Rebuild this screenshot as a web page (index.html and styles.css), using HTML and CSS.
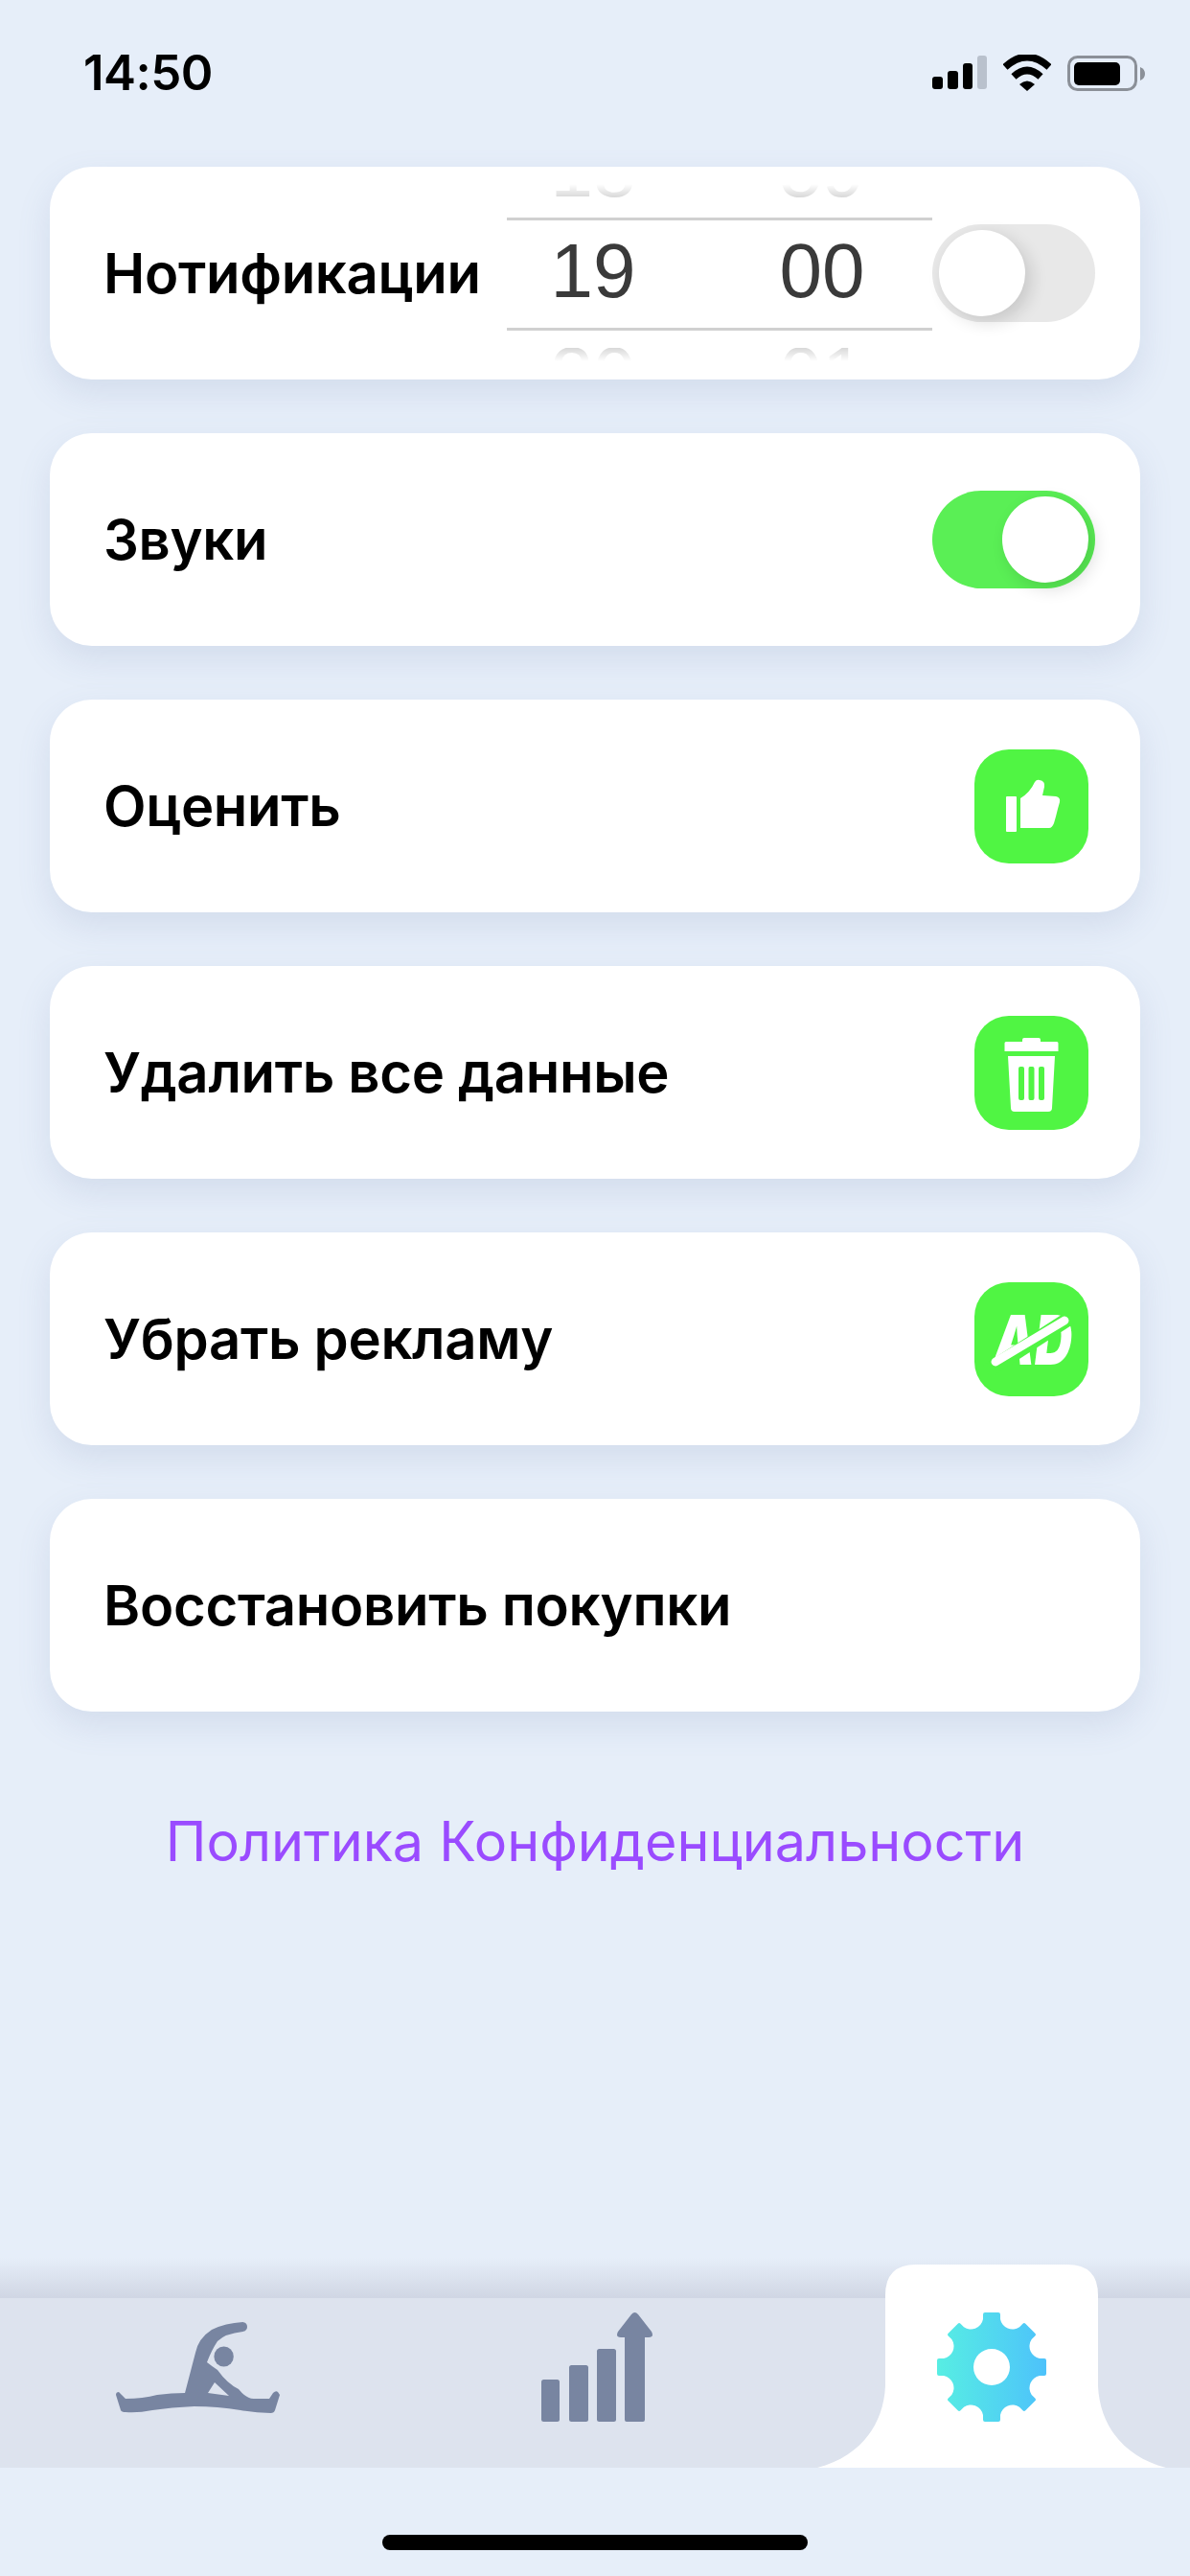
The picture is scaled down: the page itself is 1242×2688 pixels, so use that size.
FILE: index.html
```html
<!DOCTYPE html>
<html lang="ru">
<head>
<meta charset="utf-8">
<title>Настройки</title>
<link rel="stylesheet" href="styles.css">
</head>
<body>
<div class="screen">
  <header class="status">
    <span class="status-time">14:50</span>
    <div class="status-icons">
      <svg class="ic-signal" viewBox="973 58 57 36"><rect x="973" y="80" width="11" height="13" rx="3"/><rect x="989" y="74" width="11" height="19" rx="3"/><rect x="1005" y="66" width="10" height="27" rx="3"/><rect class="dim" x="1020" y="58" width="10" height="35" rx="3"/></svg>
      <svg class="ic-wifi" viewBox="1047 56 50 38"><path class="arc" d="M1049 69 Q1072 48 1095 69"/><path class="arc" d="M1058 79 Q1072 66 1086 79"/><path d="M1064 87 Q1072 80 1080 87 L1072 94 Z"/></svg>
      <svg class="ic-batt" viewBox="1114 56 81 38"><rect class="batt-shell" x="1115.5" y="58.5" width="70" height="34" rx="9"/><rect x="1121" y="64" width="48" height="24" rx="5"/><path class="dim2" d="M1190 69 Q1195 71 1195 76 Q1195 81 1190 83 Z"/></svg>
    </div>
  </header>

  <main class="content">
    <section class="card">
      <span class="label">Нотификации</span>
      <div class="picker">
        <div class="wheel wheel-top"><span>18</span><span>59</span></div>
        <div class="wheel-mid"><span>19</span><span>00</span></div>
        <div class="wheel wheel-bottom"><span>20</span><span>01</span></div>
      </div>
      <div class="toggle"><div class="knob"></div></div>
    </section>

    <section class="card">
      <span class="label">Звуки</span>
      <div class="toggle toggle-on"><div class="knob"></div></div>
    </section>

    <section class="card">
      <span class="label">Оценить</span>
      <svg class="action" viewBox="37 21 119 119">
        <rect class="action-bg" x="37" y="21" width="119" height="119" rx="36"/>
        <rect class="w" x="70" y="70" width="11" height="37" rx="1"/>
        <path class="w" d="M85 72 Q95 66 100 55 Q102 52 105 53 Q111 54 110 60 L108 69 L122 70 Q127 71 126 76 L124 83 L122 91 L120 98 Q118 103 115 103 L85 103 Z"/>
      </svg>
    </section>

    <section class="card">
      <span class="label">Удалить все данные</span>
      <svg class="action" viewBox="37 19 119 119">
        <rect class="action-bg" x="37" y="19" width="119" height="119" rx="36"/>
        <path class="w" d="M87 46 V44 Q87 42 89 42 H104 Q106 42 106 44 V46 H123 Q124.500 46 124.500 47.500 V56 H68.500 V47.500 Q68.500 46 70 46 Z"/>
        <path class="w" fill-rule="evenodd" d="M72 61 H121 L118 115 Q118 119 114 119 H79 Q75 119 75 115 Z M85 72 Q83 72 83 74 V105 Q83 107 85 107 H87 Q89 107 89 105 V74 Q89 72 87 72 Z M95 72 Q93.500 72 93.500 74 V105 Q93.500 107 95 107 H97.500 Q99.500 107 99.500 105 V74 Q99.500 72 97.500 72 Z M106 72 Q104 72 104 74 V105 Q104 107 106 107 H108 Q110 107 110 105 V74 Q110 72 108 72 Z"/>
      </svg>
    </section>

    <section class="card">
      <span class="label">Убрать рекламу</span>
      <svg class="action" viewBox="37 17 119 119">
        <rect class="action-bg" x="37" y="17" width="119" height="119" rx="36"/>
        <text class="ad-text" x="57" y="103" textLength="82" lengthAdjust="spacingAndGlyphs">AD</text>
        <path class="ad-gap" d="M50 110 L140 52"/>
        <path class="ad-line" d="M59 100 L131 57"/>
      </svg>
    </section>

    <section class="card">
      <span class="label">Восстановить покупки</span>
    </section>

    <a class="policy">Политика Конфиденциальности</a>
  </main>

  <nav class="tabs">
    <div class="tab">
      <svg class="ic-stretch" viewBox="120 2420 176 100">
        <ellipse cx="234.600" cy="2459" rx="10.200" ry="10.500"/>
        <path fill-rule="evenodd" d="M254.500 2423 Q259 2424 259 2428 Q259 2432 254.500 2433 Q236 2435 228 2443 Q222 2452 217 2465 Q222 2469 228 2473 Q238 2487 250 2493 Q258 2503 265.600 2503 L282 2503 L286 2497 Q289 2494 291 2496 L293 2499 L288 2515 Q287 2518 283.600 2518 Q268 2518 252 2515 Q228 2511 203.600 2511 Q180 2512 160 2515 Q145 2518 132 2517 Q128 2517 127 2515 L122 2499 Q122 2496 125 2496 L132 2503 Q150 2503 165 2499 Q180 2497 194 2497 L205 2455 Q208 2440 222 2431 Q236 2424 254.500 2423 Z M225 2486 L218 2497 L240 2500 Z"/>
      </svg>
    </div>
    <div class="tab">
      <svg class="ic-chart" viewBox="565 2413 116 114">
        <rect x="565" y="2483" width="19" height="44" rx="2.500"/>
        <rect x="594" y="2468" width="20" height="59" rx="2.500"/>
        <rect x="623" y="2451" width="20" height="76" rx="2.500"/>
        <path d="M652 2525 V2439 H648 Q642 2439 645 2433 L659 2415 Q662.500 2411 666 2415 L680 2433 Q683 2439 677 2439 H673 V2525 Q673 2527 671 2527 H654 Q652 2527 652 2525 Z"/>
      </svg>
    </div>
    <div class="tab tab-active">
      <svg class="tab-shape" viewBox="853 2363 364 212"><path d="M853 2575 C896 2564 922 2532 924 2490 L924 2395 Q924 2363 956 2363 L1114 2363 Q1146 2363 1146 2395 L1146 2490 C1148 2532 1174 2564 1217 2575 Z"/></svg>
      <svg class="ic-gear" viewBox="-58 -58 116 116">
        <defs><linearGradient id="gearFill" x1="0" x2="1" y1="0.500" y2="0.500"><stop offset="0" stop-color="#57eee3"/><stop offset="1" stop-color="#4dc2fb"/></linearGradient></defs>
        <path fill="url(#gearFill)" fill-rule="evenodd" d="M-9 -50 L-9 -55 Q-9 -57 -7 -57 L7 -57 Q9 -57 9 -55 L9 -50 A13 13 0 0 0 29 -41.700 L32.500 -45.300 Q33.900 -46.700 35.300 -45.300 L45.300 -35.300 Q46.700 -33.900 45.300 -32.500 L41.700 -29 A13 13 0 0 0 50 -9 L55 -9 Q57 -9 57 -7 L57 7 Q57 9 55 9 L50 9 A13 13 0 0 0 41.700 29 L45.300 32.500 Q46.700 33.900 45.300 35.300 L35.300 45.300 Q33.900 46.700 32.500 45.300 L29 41.700 A13 13 0 0 0 9 50 L9 55 Q9 57 7 57 L-7 57 Q-9 57 -9 55 L-9 50 A13 13 0 0 0 -29 41.700 L-32.500 45.300 Q-33.900 46.700 -35.300 45.300 L-45.300 35.300 Q-46.700 33.900 -45.300 32.500 L-41.700 29 A13 13 0 0 0 -50 9 L-55 9 Q-57 9 -57 7 L-57 -7 Q-57 -9 -55 -9 L-50 -9 A13 13 0 0 0 -41.700 -29 L-45.300 -32.500 Q-46.700 -33.900 -45.300 -35.300 L-35.300 -45.300 Q-33.900 -46.700 -32.500 -45.300 L-29 -41.700 A13 13 0 0 0 -9 -50 Z M19 0 A19 19 0 1 0 -19 0 A19 19 0 1 0 19 0 Z"/>
      </svg>
    </div>
  </nav>

  <footer class="home"><div class="home-bar"></div></footer>
</div>
</body>
</html>
```

FILE: styles.css
```css
* { box-sizing: border-box; }
html, body { margin: 0; padding: 0; }
body { background: #e6eef9; font-family: Inter, "Noto Sans", sans-serif; color: #000; }

.screen { width: 1242px; height: 2688px; display: flex; flex-direction: column; overflow: hidden; }

.status { height: 174px; flex: none; display: flex; justify-content: space-between; align-items: flex-start; padding: 52px 47px 0 87px; }
.status-time { font-size: 51px; font-weight: 600; line-height: 48px; letter-spacing: -0.5px; }
.status-icons { display: flex; align-items: center; gap: 17px; height: 48px; }
.ic-signal { width: 57px; height: 36px; }
.ic-signal .dim { fill: #b9c1cd; }
.ic-wifi { width: 50px; height: 38px; }
.ic-wifi .arc { fill: none; stroke: #000; stroke-width: 7.500px; }
.ic-batt { width: 81px; height: 38px; }
.batt-shell { fill: none; stroke: #8b9098; stroke-width: 3px; }
.dim2 { fill: #8b9098; }

.content { flex: 1; display: flex; flex-direction: column; gap: 56px; padding: 0 52px; }

.card { height: 222px; flex: none; background: #fff; border-radius: 44px; display: flex; align-items: center; justify-content: space-between; padding: 0 47px 0 56px; box-shadow: 0 14px 34px rgba(110, 130, 175, 0.16); }
.label { font-size: 58px; font-weight: 600; line-height: 64px; white-space: nowrap; letter-spacing: -0.3px; }

.picker { width: 444px; height: 222px; margin-left: auto; display: flex; flex-direction: column; font-family: "Liberation Sans", Roboto, sans-serif; font-weight: 400; font-size: 80px; color: #3a3a3a; }
.wheel, .wheel-mid { display: flex; padding-left: 40px; gap: 139px; }
.wheel span, .wheel-mid span { width: 100px; text-align: center; }
.wheel { height: 14px; overflow: hidden; color: #d8d8d8; line-height: 78px; }
.wheel-top { margin-top: 18px; align-items: flex-end; -webkit-mask-image: linear-gradient(to bottom, transparent, #000); mask-image: linear-gradient(to bottom, transparent, #000); }
.wheel-bottom { align-items: flex-start; -webkit-mask-image: linear-gradient(to top, transparent, #000); mask-image: linear-gradient(to top, transparent, #000); }
.wheel-top span { margin-bottom: -11px; }
.wheel-bottom span { margin-top: -11px; }
.wheel-mid { height: 118px; margin: 21px 0 18px; border-top: 3px solid #d0d0d0; border-bottom: 3px solid #d0d0d0; align-items: center; line-height: 78px; }
.wheel-mid span { position: relative; top: -3px; }

.toggle { width: 170px; height: 102px; flex: none; border-radius: 51px; background: #e8e8e8; display: flex; align-items: center; padding: 0 7px; }
.knob { width: 90px; height: 90px; border-radius: 50%; background: #fff; box-shadow: 6px 6px 18px rgba(0, 0, 0, 0.14); }
.toggle-on { background: #5aef55; justify-content: flex-end; }
.action { width: 119px; height: 119px; margin-right: 7px; flex: none; }
.action-bg { fill: #50f543; }
.action .w { fill: #fff; }
.ad-text { font-family: Inter, "Liberation Sans", sans-serif; font-style: italic; font-weight: 900; font-size: 72px; fill: #fff; }
.ad-gap { stroke: #50f543; stroke-width: 15px; fill: none; }
.ad-line { stroke: #fff; stroke-width: 9px; stroke-linecap: round; fill: none; }

.policy { align-self: center; margin-top: 47px; font-size: 57.500px; line-height: 64px; color: #9a4bff; white-space: nowrap; }

.tabs { height: 177px; flex: none; display: flex; background: #dde3ee; position: relative; padding-bottom: 33px; }
.tabs::before { content: ""; position: absolute; left: 0; right: 0; top: -42px; height: 42px; background: linear-gradient(to bottom, rgba(208, 214, 228, 0), #d0d6e4); }
.tab { flex: 1; display: flex; align-items: center; justify-content: center; position: relative; }
.ic-stretch { width: 176px; height: 100px; fill: #7885a1; }
.ic-chart { width: 116px; height: 114px; fill: #7885a1; margin-left: 4px; }
.tab-shape { position: absolute; left: 25px; bottom: -33px; width: 364px; height: 212px; fill: #fff; }
.ic-gear { width: 116px; height: 116px; position: relative; }

.home { height: 113px; flex: none; padding-top: 70px; display: flex; justify-content: center; }
.home-bar { width: 444px; height: 16px; border-radius: 8px; background: #000; }
```
